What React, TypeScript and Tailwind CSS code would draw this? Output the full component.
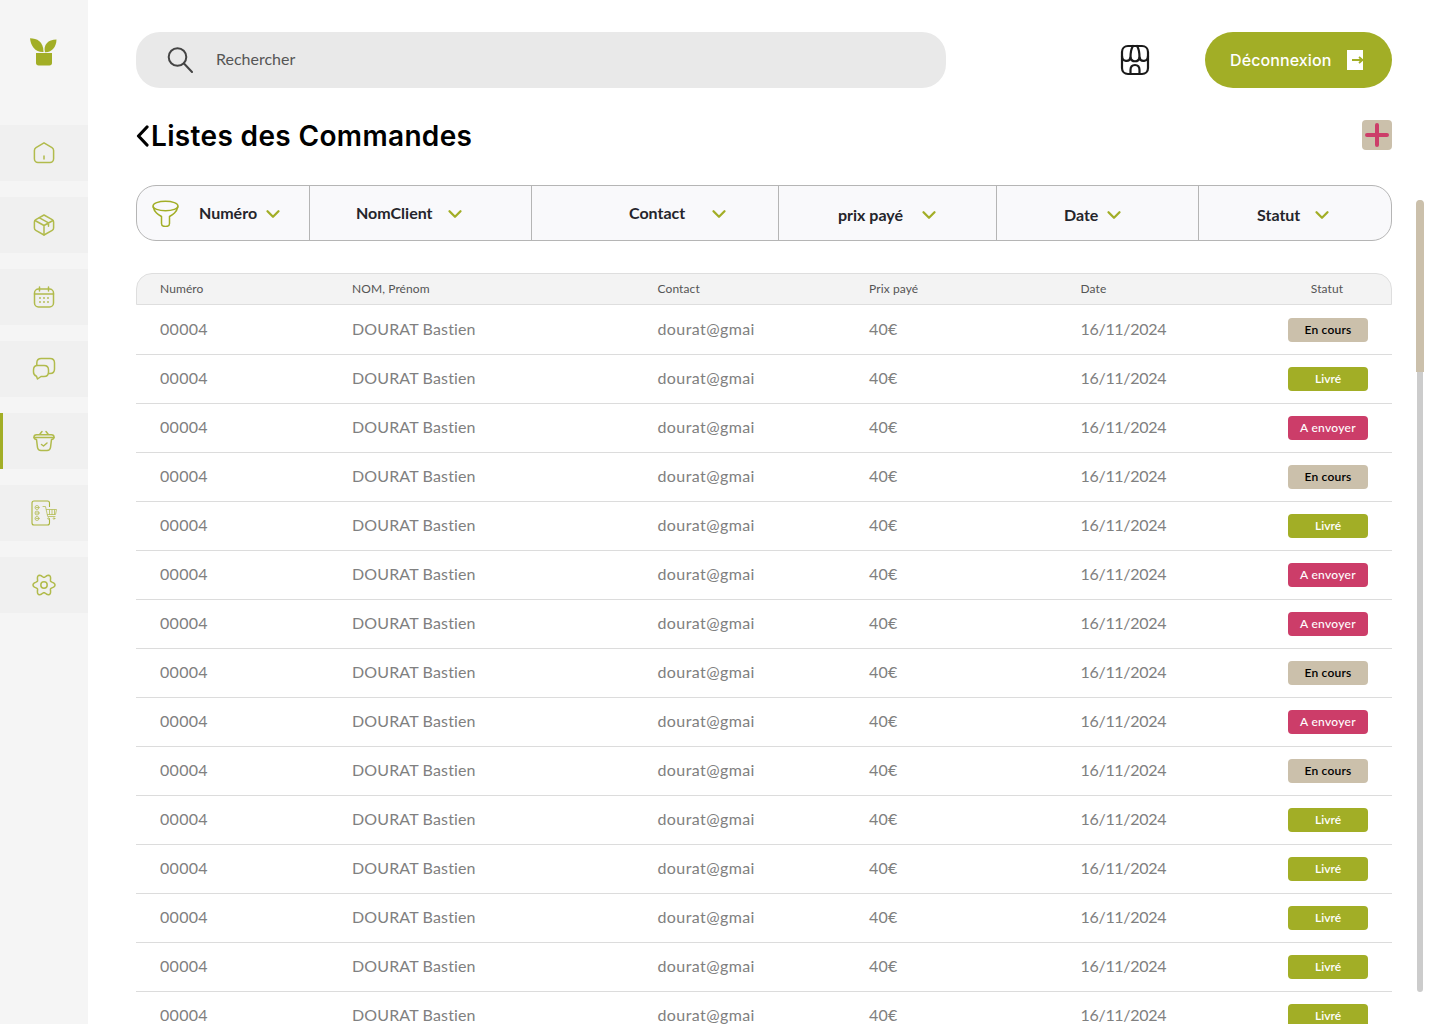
import { ChevronDown } from "lucide-react";
import type { ReactNode } from "react";

type Status = "En cours" | "Livré" | "A envoyer";

const statuses: Status[] = [
  "En cours", "Livré", "A envoyer", "En cours", "Livré", "A envoyer", "A envoyer", "En cours",
  "A envoyer", "En cours", "Livré", "Livré", "Livré", "Livré", "Livré",
];

const statusStyle: Record<Status, string> = {
  "En cours": "bg-[#cbc0ab] text-black font-semibold tracking-[0.2px]",
  "Livré": "bg-[#a2ae26] text-white font-semibold",
  "A envoyer": "bg-[#cc3d69] text-white font-medium tracking-[0.3px]",
};

const rowGrid = "grid grid-cols-[192px_305.5px_211.5px_211.5px_1fr_80px] items-center pr-6";

// six lobes, one pointing right, so the gear reads like the reference
const gearPath =
  Array.from({ length: 72 }, (_, i) => {
    const a = (i * 5 * Math.PI) / 180;
    const r = 9.3 + 1.7 * Math.cos(6 * a);
    return `${i === 0 ? "M" : "L"}${(12 + r * Math.cos(a)).toFixed(2)} ${(12 + r * Math.sin(a)).toFixed(2)}`;
  }).join("") + "Z";

function NavIcon({ children }: { children: ReactNode }) {
  return (
    <svg width="24" height="24" viewBox="0 0 24 24" fill="none" stroke="#b1bb4c" strokeWidth="1.5" strokeLinecap="round" strokeLinejoin="round">
      {children}
    </svg>
  );
}

function ChevronLeft() {
  return (
    <svg className="shrink-0 mr-[2px]" width="13" height="22" viewBox="0 0 13 22" fill="none" stroke="#000000" strokeWidth="3.200" strokeLinecap="round" strokeLinejoin="round">
      <path d="M11 2 2.500 11 11 20" />
    </svg>
  );
}

const navItems: ReactNode[] = [
  <NavIcon>
    <path d="M12 1.800 20 6.600c1 .6 1.600 1.600 1.600 2.800v8.400c0 2-1.600 3.600-3.600 3.600H6c-2 0-3.600-1.600-3.600-3.600V9.400c0-1.200.6-2.200 1.600-2.800L12 1.800Z" />
    <path d="M12 15v3" />
  </NavIcon>,
  <NavIcon>
    <path d="M12 2 20.200 6.600c.9.5 1.400 1.400 1.400 2.400v6c0 1-.5 1.900-1.400 2.400L12 22l-8.200-4.600c-.9-.5-1.400-1.400-1.400-2.400V9c0-1 .5-1.900 1.400-2.400L12 2Z" />
    <path d="M3 7.500 12 12.500l9-5M12 12.500V22M7.500 4.800l9 5v3.400" />
  </NavIcon>,
  <NavIcon>
    <rect x="2.500" y="4" width="19" height="18" rx="4" />
    <path d="M2.500 9h19M7.500 2v4M16.500 2v4" />
    <path d="M8 13h.01M12 13h.01M16 13h.01M8 17h.01M12 17h.01M16 17h.01" strokeWidth="1.800" />
  </NavIcon>,
  <NavIcon>
    <path d="M4.800 8V6c0-3 1.500-4.500 4.500-4.500H18c3 0 4.500 1.500 4.500 4.500v6c0 3-1.500 4.500-4.500 4.500h-1.500" />
    <path d="M5.500 8.500H12c3 0 4.500 1.500 4.500 4.500v2c0 3-1.500 4.500-4.500 4.500H9l-3.500 2.500-1-2.800C2.500 18.500 1.500 17 1.500 15v-2c0-3 1.500-4.500 4-4.500Z" />
  </NavIcon>,
  <NavIcon>
    <path d="M2 8.500h20M8 5l2-2.500M16 5l-2-2.500" />
    <path d="M2 8c0-1.500 1-2.300 2.500-2.300h15C21 5.700 22 6.500 22 8s-1 2.300-2.500 2.500l-1 8c-.3 2-1.500 3-3.500 3H9c-2 0-3.200-1-3.500-3l-1-8C3 10.300 2 9.500 2 8Z" />
    <path d="m9.500 15.500 2 1.500 3.500-3" />
  </NavIcon>,
  <svg width="26" height="26" viewBox="0 0 26 26" fill="none" stroke="#a9b43a" strokeLinecap="round" strokeLinejoin="round">
    <path d="M18.500 6.500V3c0-1.300-.7-2-2-2H3C1.700 1 1 1.700 1 3v20c0 1.300.7 2 2 2h13.500c1.300 0 2-.7 2-2v-3.500" strokeWidth="1.100" />
    <g strokeWidth=".8" opacity=".85">
      <circle cx="6" cy="7.500" r="2" />
      <circle cx="6" cy="13" r="2" />
      <circle cx="6" cy="18.500" r="2" />
      <path d="M5 7.500h2M5 13h2M5 18.500h2" />
      <path d="M12 6.500h2.500l2.200 10h7.300M15.500 9.500h10l-1 5h-8" />
      <path d="M18.500 10v4.500M21 10v4.500M23.500 10v4.500" />
      <circle cx="17.500" cy="18.500" r=".8" />
      <circle cx="23" cy="18.500" r=".8" />
    </g>
  </svg>,
  <NavIcon>
    <circle cx="12" cy="12" r="3.200" />
    <path d={gearPath} />
  </NavIcon>,
];

const filters = [
  { label: "Numéro", width: "w-[173px]", pad: "pl-[15px]", gap: "gap-[5px]", labelClass: "", chevron: "pt-[2px]" },
  { label: "NomClient", width: "w-[222px]", pad: "pl-[46px]", gap: "gap-[11px]", labelClass: "", chevron: "pt-[2px]" },
  { label: "Contact", width: "w-[247px]", pad: "pl-[97px]", gap: "gap-[23px]", labelClass: "", chevron: "pt-[2px]" },
  { label: "prix payé", width: "w-[218px]", pad: "pl-[59px]", gap: "gap-[15px]", labelClass: "pt-[3px]", chevron: "pt-[3px]" },
  { label: "Date", width: "w-[202px]", pad: "pl-[67px]", gap: "gap-[5px]", labelClass: "pt-[3px]", chevron: "pt-[3px]" },
  { label: "Statut", width: "flex-1", pad: "pl-[58px]", gap: "gap-[11px]", labelClass: "pt-[3px]", chevron: "pt-[3px]" },
];

const font = "font-['Lato','Noto_Sans',sans-serif]";

export default function App() {
  return (
    <div className={`flex h-screen overflow-hidden bg-white relative ${font}`}>
      <aside className="w-[88px] shrink-0 bg-[#f5f5f5] flex flex-col">
        <div className="h-[125px] flex justify-center pt-[38px]">
          <svg width="28" height="28" viewBox="0 0 28 28" fill="#a2ae26">
            <path d="M0 .3C7 .3 13.500 3.500 13.500 14 5.500 14.500 .8 8.500 0 .3Z" />
            <path d="M26.500 1.500C26.300 9 22 14.500 15 14.200 13 7 18 1.500 26.500 1.500Z" />
            <path d="M6 15h16v10c0 1.500-1 2.500-2.500 2.500h-11C7 27.500 6 26.500 6 25V15Z" />
          </svg>
        </div>
        <nav className="flex flex-col gap-4">
          {navItems.map((icon, i) => (
            <div key={i} className={`h-14 bg-[#f0f0f0] flex items-center justify-center ${i === 4 ? "border-l-[3px] border-[#a2ae26] pr-[3px]" : ""}`}>
              {icon}
            </div>
          ))}
        </nav>
      </aside>

      <main className="flex-1 min-w-0 pl-12 pr-12 pt-8">
        <header className="flex items-center">
          <div className="w-[810px] h-14 rounded-[24px] bg-[#e9e9e9] flex items-center pl-[31px]">
            <svg width="26" height="26" viewBox="0 0 26 26" fill="none" stroke="#444444" strokeWidth="2" strokeLinecap="round">
              <circle cx="10.500" cy="10" r="8.800" />
              <path d="M17 16.500 25 25" />
            </svg>
            <span className="ml-[23px] -mt-[2px] text-[16px] text-[#555555]">Rechercher</span>
          </div>
          <svg className="ml-[174px]" width="30" height="32" viewBox="0 0 30 32" fill="none" stroke="#1a1a1a" strokeWidth="2.200" strokeLinejoin="round" strokeLinecap="round">
            <path d="M8 2h14c3.500 0 6 2.500 6 6v16c0 3.500-2.500 6-6 6H8c-3.500 0-6-2.500-6-6V8c0-3.500 2.500-6 6-6Z" />
            <path d="M2 12c0 6 7.500 6.500 8.500 1.500.8 5 8.200 5 9 0 1 5 8.500 4.500 8.500-1.500" />
            <path d="M10.500 13.500C10.500 9 11 5 13 2M19.500 13.500C19.500 9 19 5 17 2" />
            <path d="M10.500 30v-4c0-3 1.800-5 4.500-5s4.500 2 4.500 5v4" />
          </svg>
          <button className="ml-[55px] w-[187px] h-14 rounded-[28px] bg-[#a2ae26] flex items-center pl-[25px] font-['Inter',sans-serif] font-medium text-[16px] tracking-[0.1px] text-white">
            Déconnexion
            <svg className="ml-[16px]" width="17" height="20" viewBox="0 0 17 20">
              <rect width="16" height="20" fill="#ffffff" />
              <path d="M5 10h10M12 7l3.500 3-3.500 3" fill="none" stroke="#a2ae26" strokeWidth="1.800" />
            </svg>
          </button>
        </header>

        <div className="mt-[32px] h-[30px] flex items-center justify-between">
          <h1 className="flex items-center pt-[2px] font-['Inter',sans-serif] text-[28px] font-semibold text-black tracking-[0.35px]">
            <ChevronLeft />
            Listes des Commandes
          </h1>
          <button className="w-[30px] h-[30px] rounded-[4px] bg-[#cbc0ab] flex items-center justify-center">
            <svg width="24" height="24" viewBox="0 0 24 24">
              <path d="M12 2v20M2 12h20" stroke="#cc3d69" strokeWidth="4" strokeLinecap="round" />
            </svg>
          </button>
        </div>

        <div className="mt-[35px] h-14 rounded-[20px] border border-[#b5b5b5] bg-[#f9f9fb] flex">
          {filters.map((f, i) => (
            <div key={f.label} className={`${f.width} ${f.pad} ${f.gap} shrink-0 flex items-center text-[16px] font-bold text-[#25252b] ${i < 5 ? "border-r border-[#b5b5b5]" : ""}`}>
              {i === 0 && (
                <svg className="mr-[15px]" width="27" height="27" viewBox="0 0 27 27" fill="none" stroke="#a2ae26" strokeWidth="1.500" strokeLinejoin="round">
                  <ellipse cx="13.500" cy="6" rx="12.500" ry="4.800" />
                  <path d="M1 6.500c1.500 6 5 8 8.500 10v7c0 2 1.500 3 4 3s4-1 4-3v-7c3.500-2 7-4 8.500-10" />
                </svg>
              )}
              <span className={f.labelClass}>{f.label}</span>
              <span className={f.chevron}>
                <ChevronDown size={22} strokeWidth={2.500} className="text-[#a2ae26]" />
              </span>
            </div>
          ))}
        </div>

        <section className="mt-8">
          <div className={`${rowGrid} h-[32px] pl-[23px] rounded-t-[16px] border border-[#dedede] bg-[#f3f3f3] text-[12px] tracking-[0.1px] text-[#555555]`}>
            <span>Numéro</span>
            <span>NOM, Prénom</span>
            <span>Contact</span>
            <span>Prix payé</span>
            <span>Date</span>
            <span className="text-center">Statut</span>
          </div>
          {statuses.map((s, i) => (
            <div key={i} className={`${rowGrid} pl-6 h-[49px] ${i === 0 ? "h-[50px] pt-[1px]" : ""} border-b border-[#dcdcdc] text-[16px] text-[#808080]`}>
              <span className="pb-[2px] tracking-[0.3px]">00004</span>
              <span className="pb-[2px] tracking-[0.15px]">DOURAT Bastien</span>
              <span className="pb-[2px] tracking-[0.4px]">dourat@gmai</span>
              <span className="pb-[2px] tracking-[0.2px]">40€</span>
              <span className="pb-[2px] tracking-[-0.3px]">16/11/2024</span>
              <span className={`h-6 rounded-[4px] flex items-center justify-center text-[12px] ${statusStyle[s]}`}>{s}</span>
            </div>
          ))}
        </section>
      </main>

      <div className="absolute left-[1417px] top-[200px] w-[6px] h-[792px] bg-[#cccccc] rounded-full" />
      <div className="absolute left-[1416px] top-[200px] w-[8px] h-[172px] bg-[#cbc0ab] rounded-t-full" />
    </div>
  );
}
